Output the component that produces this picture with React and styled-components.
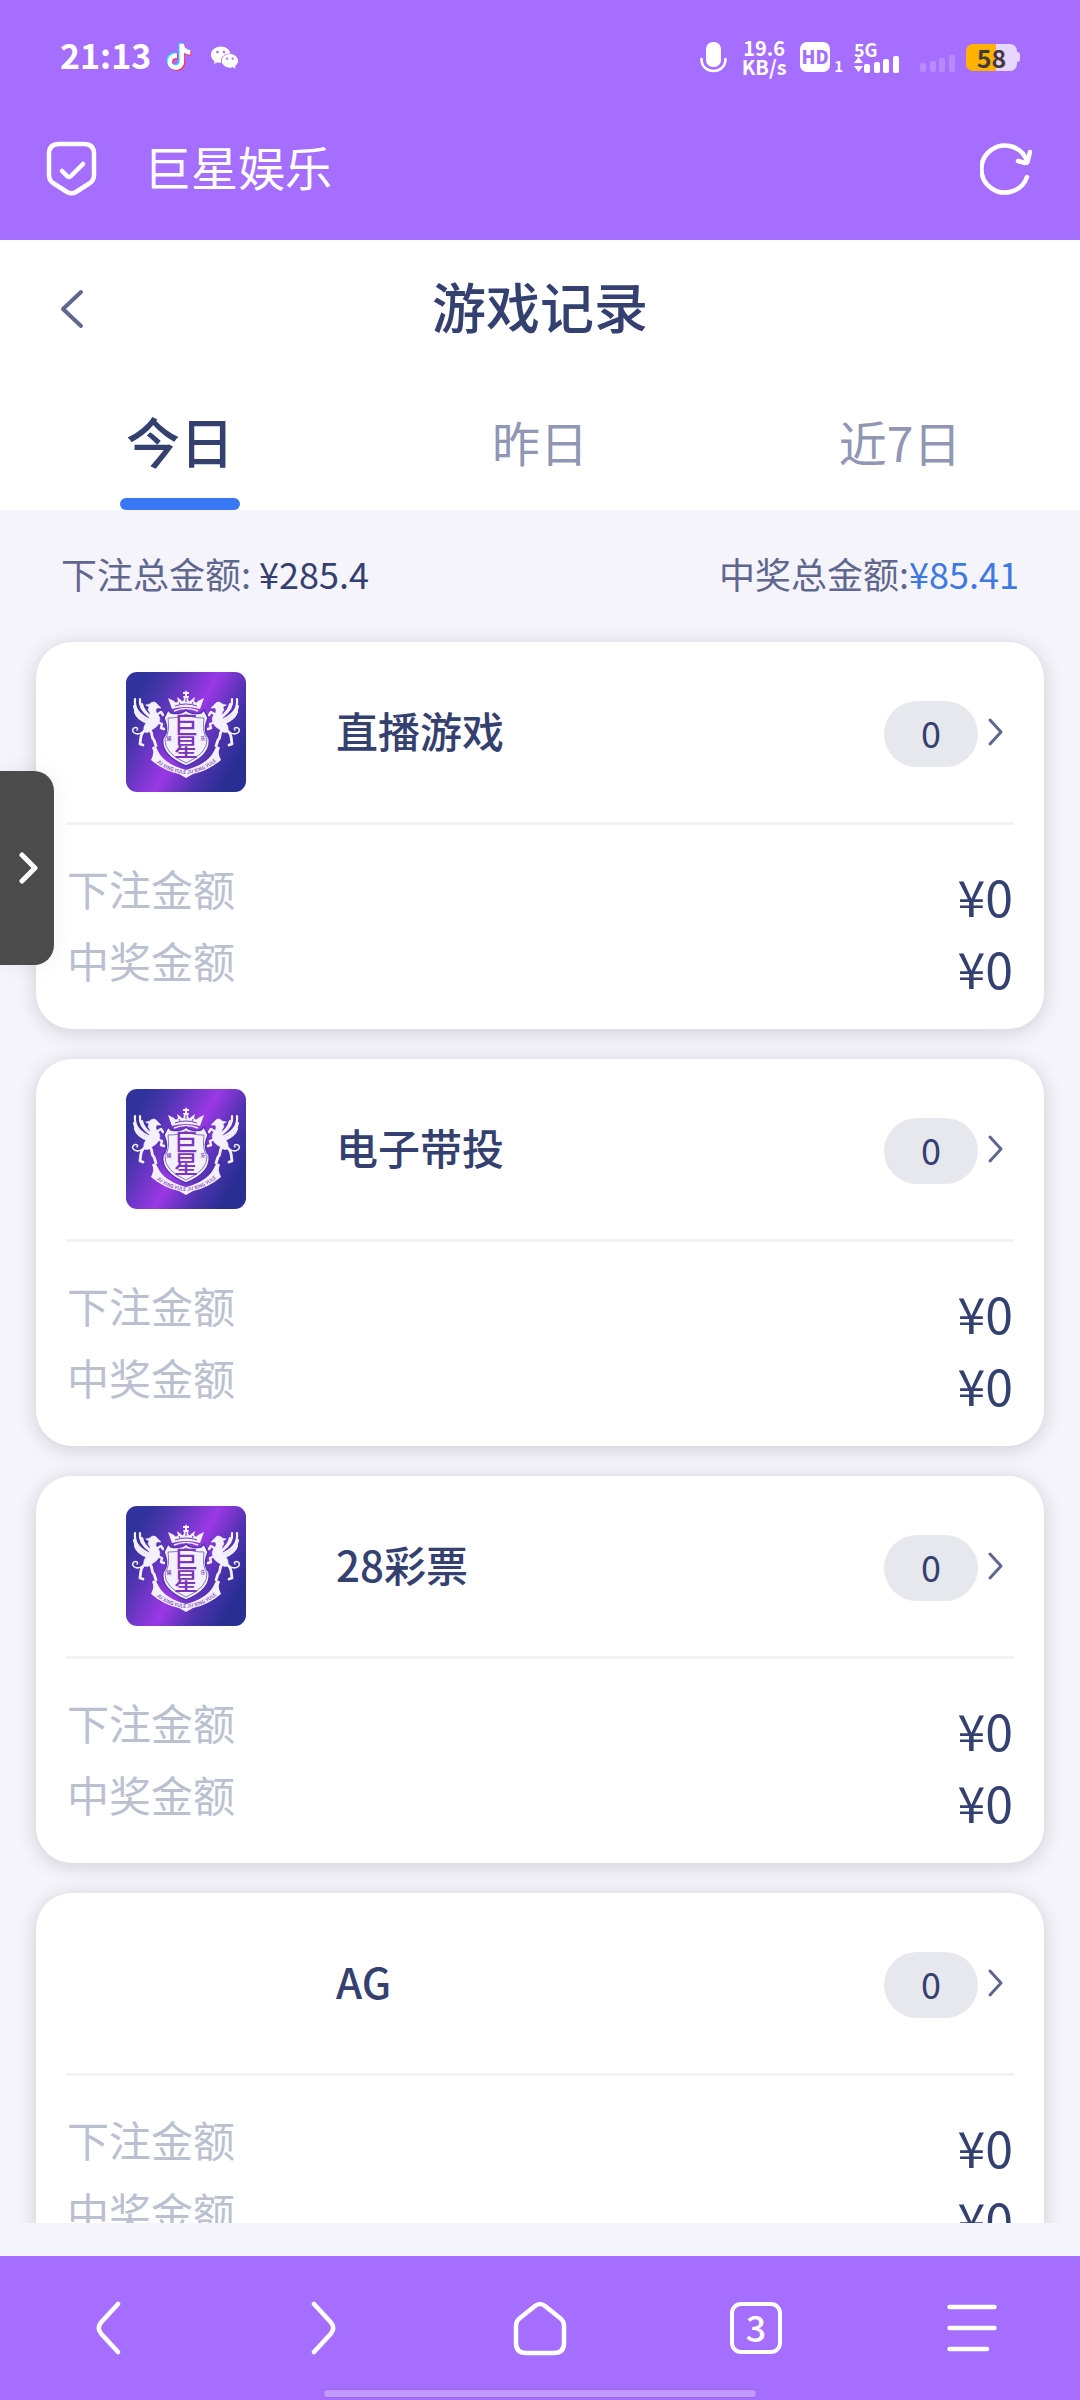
import React from 'react'
import styled, { createGlobalStyle } from 'styled-components'
import { AiFillWechat } from 'react-icons/ai'
import { FaTiktok } from 'react-icons/fa'

const GlobalStyle = createGlobalStyle`
  * { box-sizing: border-box; }
  body { margin: 0; }
  button {
    margin: 0;
    padding: 0;
    border: 0;
    background: none;
    font: inherit;
    color: inherit;
    cursor: pointer;
  }
  svg { display: block; }
`

const purple = '#a56eff'
const navy = '#34406f'
const slate = '#5f678f'

const Page = styled.div`
  display: flex;
  flex-direction: column;
  height: 100vh;
  background: #f5f4fb;
  color: ${navy};
  font-family: 'Noto Sans CJK SC', sans-serif;
`

const StatusBar = styled.div`
  display: flex;
  align-items: center;
  height: 96px;
  padding: 18px 60px 0;
  background: ${purple};
  color: #fff;
  font-weight: 700;
`

const Clock = styled.time`
  padding-bottom: 4px;
  font-size: 34px;
  line-height: 40px;
`

const Notices = styled.div`
  display: flex;
  align-items: center;
  flex: 1;
  gap: 18px;
  padding-left: 16px;
`

const Tiktok = styled.span`
  display: grid;
  svg {
    grid-area: 1 / 1;
    width: 24px;
    height: 26px;
    transform: translate(0, 0);
  }
  svg:nth-child(1) { color: #25f4ee; transform: translate(-1px, -1px); }
  svg:nth-child(2) { color: #fe2c55; transform: translate(1px, 1px); }
`

const Signals = styled.div`
  display: flex;
  align-items: center;
`

const Speed = styled.div`
  width: 46px;
  margin: 0 13px 0 14px;
  font-size: 20px;
  line-height: 19px;
  text-align: center;
`

const Hd = styled.div`
  display: flex;
  align-items: flex-end;
  gap: 4px;
  margin-right: 11px;
  font-size: 15px;
  line-height: 13px;
  b {
    width: 30px;
    height: 30px;
    border-radius: 7px;
    background: #fff;
    color: ${purple};
    font-size: 18px;
    line-height: 29px;
    text-align: center;
  }
`

const Network = styled.div`
  width: 46px;
  margin-right: 20px;
  font-size: 18px;
  line-height: 14px;
`

const Battery = styled.div`
  display: flex;
  align-items: center;
  margin-left: 10px;
  &::after {
    content: '';
    width: 3px;
    height: 10px;
    border-radius: 0 3px 3px 0;
    background: #e7d6ff;
  }
`

const BatteryBody = styled.div`
  width: 51px;
  height: 27px;
  border-radius: 7px;
  background: linear-gradient(90deg, #ffb300 58%, #e7d6ff 58%);
  color: #443a3c;
  font-size: 25px;
  line-height: 26px;
  text-align: center;
`

const BrowserBar = styled.header`
  display: flex;
  align-items: center;
  height: 144px;
  padding: 0 48px 0 46px;
  background: ${purple};
  color: #fff;
`

const SiteName = styled.div`
  flex: 1;
  padding: 0 0 4px 47px;
  font-size: 47px;
  line-height: 60px;
`

const TitleBar = styled.div`
  display: grid;
  grid-template-columns: 96px 1fr 96px;
  align-items: center;
  height: 138px;
  background: #fff;
  h1 {
    margin: 0;
    padding-bottom: 6px;
    font-size: 54px;
    font-weight: 500;
    line-height: 72px;
    text-align: center;
  }
`

const BackButton = styled.button`
  padding: 24px 0 24px 60px;
  color: ${slate};
`

const Tabs = styled.div`
  display: grid;
  grid-template-columns: repeat(3, 1fr);
  height: 132px;
  background: #fff;
`

const Tab = styled.button`
  display: flex;
  flex-direction: column;
  align-items: center;
  justify-content: space-between;
  padding-top: 27px;
  font-size: ${p => (p.$active ? 54 : 48)}px;
  font-weight: ${p => (p.$active ? 500 : 400)};
  line-height: 72px;
  color: ${p => (p.$active ? navy : '#9096b3')};
  &::after {
    content: '';
    width: 120px;
    height: 12px;
    border-radius: 6px;
    background: ${p => (p.$active ? '#3a77f5' : 'transparent')};
  }
`

const Summary = styled.div`
  display: flex;
  justify-content: space-between;
  padding: 33px 61px 15px;
  font-size: 36px;
  line-height: 60px;
  color: ${slate};
`

const Total = styled.b`
  font-weight: 400;
  color: ${p => (p.$win ? '#3d78e3' : navy)};
`

const List = styled.main`
  flex: 1;
  display: flex;
  flex-direction: column;
  gap: 30px;
  min-height: 0;
  margin-bottom: 33px;
  padding: 24px 36px 0;
  overflow: hidden;
`

const Card = styled.article`
  flex: none;
  padding: 0 30px 24px;
  border-radius: 36px;
  background: #fff;
  box-shadow: 0 3px 20px rgba(0, 0, 0, 0.16);
`

const CardHead = styled.button`
  display: flex;
  align-items: center;
  width: 100%;
  height: 183px;
  padding: 0 10px 0 60px;
  border-bottom: 3px solid #f3f3f4;
  text-align: left;
  > svg { color: ${slate}; }
`

const LogoSlot = styled.span`
  width: 120px;
  height: 120px;
  margin-right: 90px;
`

const GameName = styled.span`
  flex: 1;
  padding-bottom: 4px;
  font-size: 42px;
  font-weight: 500;
  line-height: 60px;
`

const Count = styled.span`
  width: 94px;
  height: 66px;
  margin: 3px 9px 0 0;
  border-radius: 33px;
  background: #e7e8ee;
  font-size: 36px;
  line-height: 62px;
  text-align: center;
`

const Amounts = styled.dl`
  margin: 0;
  padding: 36px 0 0;
`

const AmountRow = styled.div`
  display: flex;
  justify-content: space-between;
  height: 72px;
  padding: 0 1px;
  dt {
    font-size: 42px;
    line-height: 54px;
    color: #bbc0d0;
  }
  dd {
    margin: 0;
    font-size: 50px;
    line-height: 68px;
  }
`

const NavBar = styled.nav`
  position: relative;
  display: grid;
  grid-template-columns: repeat(5, 1fr);
  height: 144px;
  background: ${purple};
  color: #fff;
  &::after {
    content: '';
    position: absolute;
    left: 30%;
    right: 30%;
    bottom: 3px;
    height: 7px;
    border-radius: 4px;
    background: #c199ff;
    box-shadow: 0 0 2px #8052cf;
  }
`

const NavButton = styled.button`
  display: flex;
  align-items: center;
  justify-content: center;
`

const TabCount = styled.span`
  width: 52px;
  height: 52px;
  border: 4px solid #fff;
  border-radius: 11px;
  font-size: 36px;
  font-weight: 500;
  line-height: 40px;
`

// floats over the list on the left edge
const DrawerHandle = styled.button`
  position: absolute;
  top: 771px;
  left: 0;
  display: flex;
  align-items: center;
  justify-content: flex-end;
  width: 54px;
  height: 194px;
  padding-right: 16px;
  border-radius: 0 20px 20px 0;
  background: #4b4b4b;
  color: #fff;
  box-shadow: 0 0 24px rgba(0, 0, 0, 0.06);
`

const Chevron = ({ left, w, h, stroke }) => (
  <svg width={w} height={h} fill="none" stroke="currentColor" strokeWidth={stroke}
    strokeLinecap="round" strokeLinejoin="round">
    <path d={left
      ? `M${w - 3} 3L3 ${h / 2}L${w - 3} ${h - 3}`
      : `M3 3L${w - 3} ${h / 2}L3 ${h - 3}`} />
  </svg>
)

const NavArrow = ({ flip }) => (
  <svg width="26" height="54" fill="none" stroke="currentColor" strokeWidth="4.5" strokeLinecap="round">
    <path
      transform={flip ? 'translate(26 0) scale(-1 1)' : undefined}
      d="M23 3L6 21.500Q1.500 27 6 32.500L23 51" />
  </svg>
)

const Bars = ({ faded }) => (
  <svg width="36" height="17" fill="#fff" opacity={faded ? 0.2 : 1}>
    <rect x="0" y="8" width="6" height="9" rx="2" />
    <rect x="10" y="6" width="6" height="11" rx="2" />
    <rect x="19" y="3" width="6" height="14" rx="2" />
    <rect x="29" y="0" width="6" height="17" rx="2" />
  </svg>
)

const FadedBars = styled.div`
  padding-top: 13px;
`

const NetworkBars = styled.div`
  display: flex;
  gap: 1px;
`

const Griffin = () => (
  <g stroke="#f4f0fc" strokeLinecap="round" strokeLinejoin="round" fill="none">
    <g strokeWidth="2.2">
      <path d="M9 27C8 36 13 43 22 47" />
      <path d="M14 27C13 34 17 40 24 45" />
      <path d="M8 34C9 41 13 46 22 49" />
      <path d="M9 40C11 46 15 49 22 51" />
      <path d="M16 32C17 38 20 41 25 45" />
    </g>
    <path fill="#f4f0fc" strokeWidth="0.600" d="M20 33L24 32C25 30 29 29 31 32L35 36L31 36C29 38 30 41 33 44C35 48 33 54 27 57C24 60 20 62 18 59C17 54 20 51 23 47C25 43 24 40 22 38L23 35Z" />
    <path strokeWidth="2.400" d="M30 43L35 40L37 43M31 50L36 52L35 56L38 57" />
    <path strokeWidth="2.800" d="M23 58C28 60 24 65 28 68L30 74" />
    <path strokeWidth="2.800" d="M20 58C14 61 15 66 14 72L17 73" />
    <path strokeWidth="1.500" d="M18 59C11 65 5 60 7 57C9 54 13 56 11 58" />
  </g>
)

const Logo = ({ id }) => (
  <svg width="120" height="120" viewBox="0 0 120 120" role="img" aria-label="巨星">
    <defs>
      <linearGradient id={'bg' + id} gradientUnits="userSpaceOnUse" x1="6" y1="30" x2="112" y2="88">
        <stop offset="0" stopColor="#2f339b" />
        <stop offset="0.180" stopColor="#4c35ae" />
        <stop offset="0.520" stopColor="#9a38e6" />
        <stop offset="0.780" stopColor="#4d32ae" />
        <stop offset="1" stopColor="#292e93" />
      </linearGradient>
      <path id={'ribbon' + id} d="M27 87Q42 101 60 102Q80 100 94 86" />
    </defs>
    <rect width="120" height="120" rx="11" fill={`url(#bg${id})`} />
    <Griffin />
    <g transform="translate(120 0) scale(-1 1)"><Griffin /></g>
    <path fill="#f4f0fc" d="M46 37L42 26L48 29Q50 32 52 29L51 25L55 28Q57 31 58 27L57 24L59 24L59 22L57 22L57 20L59 20L60 18L61 20L63 20L63 22L61 22L61 24L63 24L62 27Q63 31 65 28L69 25L68 29Q70 32 72 29L78 26L74 37Q60 33 46 37Z" />
    <path fill="none" stroke="#6b38bc" strokeWidth="1" d="M49 34Q60 30 71 34M53 30L54 32M66 32L67 30M60 26L60 30" />
    <path fill="none" stroke="#f4f0fc" strokeWidth="1.500" d="M48 39Q60 34 72 39" />
    <path fill="#f4f0fc" d="M26 76Q29 72 32 79Q38 92 60 98Q82 92 88 79Q91 72 94 76Q91 80 95 88Q82 99 67 102L60 106L53 102Q38 99 25 88Q29 80 26 76Z" />
    <path fill="#f4f0fc" stroke="#4f35ad" strokeWidth="1.500" d="M38 46L42 38L45 41Q55 43 60 38Q65 43 75 41L78 38L82 46L80 52Q78 61 83 66Q86 83 60 94Q34 83 37 66Q42 61 40 52Z" />
    <path fill="none" stroke="#6f55b5" strokeWidth="0.800" d="M42 46Q55 46 60 42Q65 46 78 46Q76 60 81 67Q82 81 60 91Q38 81 39 67Q44 60 42 46Z" />
    <g fill="#7c35bd" fontFamily="Noto Sans CJK SC" fontWeight="500" textAnchor="middle">
      <text x="60" y="62" fontSize="24">巨</text>
      <text x="60" y="84" fontSize="24">星</text>
      <text x="43" y="68" fontSize="5">娱</text>
      <text x="77" y="68" fontSize="5">乐</text>
      <text fontSize="5">
        <textPath href={'#ribbon' + id} startOffset="50%">JU XING YULE  JU XING YULE</textPath>
      </text>
    </g>
  </svg>
)

const games = [
  { id: 1, name: '直播游戏', logo: true, count: 0, bet: 0, win: 0 },
  { id: 2, name: '电子带投', logo: true, count: 0, bet: 0, win: 0 },
  { id: 3, name: '28彩票', logo: true, count: 0, bet: 0, win: 0 },
  { id: 4, name: 'AG', logo: false, count: 0, bet: 0, win: 0 },
]

const tabs = ['今日', '昨日', '近7日']

const GameCard = ({ game }) => (
  <Card>
    <CardHead>
      <LogoSlot>{game.logo && <Logo id={game.id} />}</LogoSlot>
      <GameName>{game.name}</GameName>
      <Count>{game.count}</Count>
      <Chevron w={17} h={30} stroke={3} />
    </CardHead>
    <Amounts>
      <AmountRow><dt>下注金额</dt><dd>¥{game.bet}</dd></AmountRow>
      <AmountRow><dt>中奖金额</dt><dd>¥{game.win}</dd></AmountRow>
    </Amounts>
  </Card>
)

const PhoneStatus = () => (
  <StatusBar>
    <Clock>21:13</Clock>
    <Notices>
      <Tiktok><FaTiktok /><FaTiktok /><FaTiktok /></Tiktok>
      <AiFillWechat size={31} />
    </Notices>
    <Signals>
      <svg width="27" height="31" fill="none" stroke="#fff" strokeWidth="2.500" strokeLinecap="round">
        <rect x="6" y="0" width="15" height="25" rx="7" fill="#fff" stroke="none" />
        <path d="M1.500 17C1.500 33 25.500 33 25.500 17" />
      </svg>
      <Speed>19.6<br />KB/s</Speed>
      <Hd><b>HD</b>1</Hd>
      <Network>
        5G
        <NetworkBars>
          <svg width="9" height="17" fill="#fff"><path d="M4.500 1L9 7H0ZM0 10H9L4.500 16Z" /></svg>
          <Bars />
        </NetworkBars>
      </Network>
      <FadedBars><Bars faded /></FadedBars>
      <Battery><BatteryBody>58</BatteryBody></Battery>
    </Signals>
  </StatusBar>
)

class App extends React.Component {
  constructor(props) {
    super(props)
    this.state = { tab: 0 }
  }

  render() {
    const { tab } = this.state
    return (
      <Page>
        <GlobalStyle />
        <PhoneStatus />
        <BrowserBar>
          <svg width="51" height="56" fill="none" stroke="#fff" strokeWidth="4.500"
            strokeLinecap="round" strokeLinejoin="round">
            <path d="M13 4H38Q48 4 48 14V35Q48 40 44 43L30 52Q25.500 54.500 21 52L7 43Q3 40 3 35V14Q3 4 13 4Z" />
            <path d="M16 31L21 36Q23 38 25 36L37 24" />
          </svg>
          <SiteName>巨星娱乐</SiteName>
          <button aria-label="刷新">
            <svg width="52" height="54" fill="none" stroke="#fff" strokeWidth="4.500"
              strokeLinecap="round" strokeLinejoin="round">
              <path d="M47 36A23.500 23.500 0 1 1 47 20" />
              <path d="M38 20L45 22Q48 22 48 19L50 11" />
            </svg>
          </button>
        </BrowserBar>
        <TitleBar>
          <BackButton aria-label="返回"><Chevron left w={24} h={40} stroke={4} /></BackButton>
          <h1>游戏记录</h1>
        </TitleBar>
        <Tabs role="tablist">
          {tabs.map((name, i) => (
            <Tab key={name} role="tab" aria-selected={i === tab} $active={i === tab}
              onClick={() => this.setState({ tab: i })}>
              {name}
            </Tab>
          ))}
        </Tabs>
        <Summary>
          <span>下注总金额: <Total>¥285.4</Total></span>
          <span>中奖总金额:<Total $win>¥85.41</Total></span>
        </Summary>
        <List>
          {games.map(game => <GameCard key={game.id} game={game} />)}
        </List>
        <NavBar>
          <NavButton aria-label="后退"><NavArrow /></NavButton>
          <NavButton aria-label="前进"><NavArrow flip /></NavButton>
          <NavButton aria-label="主页">
            <svg width="54" height="56" fill="none" stroke="#fff" strokeWidth="4.500" strokeLinejoin="round">
              <path d="M7 18L22 6Q27 2 32 6L47 18Q51 21 51 26V43Q51 53 41 53H13Q3 53 3 43V26Q3 21 7 18Z" />
            </svg>
          </NavButton>
          <NavButton aria-label="标签页"><TabCount>3</TabCount></NavButton>
          <NavButton aria-label="菜单">
            <svg width="50" height="48" stroke="#fff" strokeWidth="4.500" strokeLinecap="round">
              <path d="M2.500 3H47.500M2.500 24H47.500M2.500 45H40" />
            </svg>
          </NavButton>
        </NavBar>
        <DrawerHandle aria-label="展开"><Chevron w={19} h={32} stroke={5} /></DrawerHandle>
      </Page>
    )
  }
}

export default App
